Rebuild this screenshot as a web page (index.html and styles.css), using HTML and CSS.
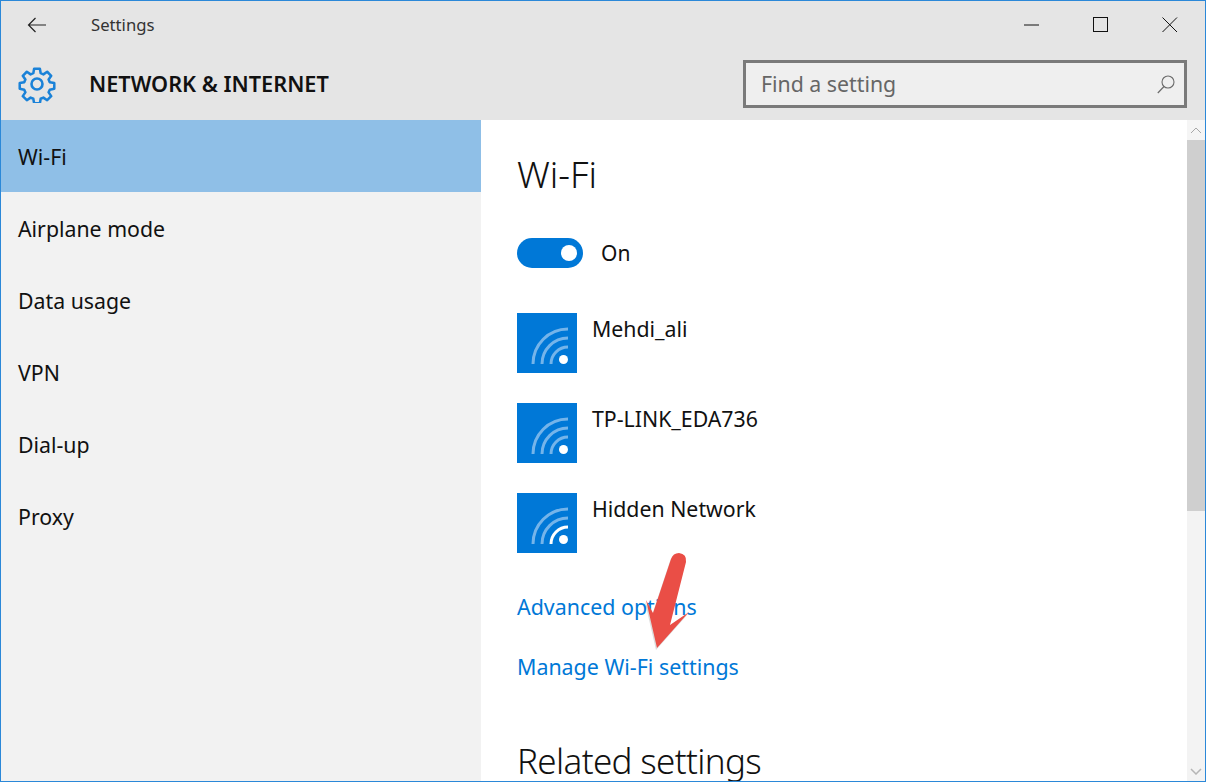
FILE: index.html
```html
<!DOCTYPE html>
<html lang="en">
<head>
<meta charset="utf-8">
<title>Settings</title>
<link rel="stylesheet" href="styles.css">
</head>
<body>
<div class="window">
  <header class="header">
    <div class="titlebar">
      <svg class="back" width="20" height="16" viewBox="0 0 20 16"><path d="M19 8H1.500M8.500 1 1.500 8l7 7" fill="none" stroke="#222" stroke-width="1.200"/></svg>
      <span class="app-title">Settings</span>
      <div class="controls">
        <svg class="ctl" width="16" height="16" viewBox="0 0 16 16"><path d="M0 8h15" stroke="#111" stroke-width="1"/></svg>
        <svg class="ctl" width="16" height="16" viewBox="0 0 16 16"><rect x=".5" y=".5" width="14" height="14" fill="none" stroke="#111"/></svg>
        <svg class="ctl" width="16" height="16" viewBox="0 0 16 16"><path d="M.5.5l14.500 14.500M15 .5.500 15" stroke="#111" stroke-width="1"/></svg>
      </div>
    </div>
    <div class="toolbar">
      <svg class="gear" width="38" height="38" viewBox="0 0 38 38"><path d="M15.800 2h6.400l.9 5 3 1.300 4.200-2.900 4.500 4.500-2.900 4.200 1.300 3 5 .9v6.400l-5 .9-1.300 3 2.900 4.200-4.500 4.500-4.200-2.900-3 1.300-.9 5h-6.400l-.9-5-3-1.300-4.200 2.900-4.500-4.500 2.900-4.200-1.300-3-5-.9v-6.400l5-.9 1.300-3-2.900-4.200 4.500-4.500 4.200 2.900 3-1.300z" fill="none" stroke="#1a82d8" stroke-width="2.800" stroke-linejoin="round" transform="translate(1.900 1.900) scale(.9)"/><circle cx="19" cy="19" r="5.500" fill="none" stroke="#1a82d8" stroke-width="2.600"/></svg>
      <h1 class="section-title">NETWORK &amp; INTERNET</h1>
      <div class="search">
        <span class="search-text">Find a setting</span>
        <svg width="18" height="19" viewBox="0 0 18 19"><circle cx="11" cy="7" r="6" fill="none" stroke="#6b6b6b" stroke-width="1.100"/><path d="M7 11.500.8 18" stroke="#6b6b6b" stroke-width="1.200" fill="none"/></svg>
      </div>
    </div>
  </header>
  <div class="body">
    <nav class="nav">
      <a class="nav-item selected">Wi-Fi</a>
      <a class="nav-item">Airplane mode</a>
      <a class="nav-item">Data usage</a>
      <a class="nav-item">VPN</a>
      <a class="nav-item">Dial-up</a>
      <a class="nav-item">Proxy</a>
    </nav>
    <main class="main">
      <div class="content">
        <h2 class="heading">Wi-Fi</h2>
        <div class="toggle-row">
          <span class="toggle"><span class="knob"></span></span>
          <span class="toggle-label">On</span>
        </div>
        <div class="networks">
          <div class="network">
            <svg class="net-icon" width="60" height="60" viewBox="0 0 60 60"><rect width="60" height="60" fill="#0078d7"/><g fill="none" stroke="#74b4ea" stroke-width="3"><path d="M16 51A35 35 0 0 1 51 16"/><path d="M25 51A26 26 0 0 1 51 25"/><path d="M34 51A17 17 0 0 1 51 34"/></g><circle cx="46.500" cy="46.500" r="4.500" fill="#fff"/></svg>
            <span class="net-name">Mehdi_ali</span>
          </div>
          <div class="network">
            <svg class="net-icon" width="60" height="60" viewBox="0 0 60 60"><rect width="60" height="60" fill="#0078d7"/><g fill="none" stroke="#74b4ea" stroke-width="3"><path d="M16 51A35 35 0 0 1 51 16"/><path d="M25 51A26 26 0 0 1 51 25"/><path d="M34 51A17 17 0 0 1 51 34"/></g><circle cx="46.500" cy="46.500" r="4.500" fill="#fff"/></svg>
            <span class="net-name">TP-LINK_EDA736</span>
          </div>
          <div class="network">
            <svg class="net-icon" width="60" height="60" viewBox="0 0 60 60"><rect width="60" height="60" fill="#0078d7"/><g fill="none" stroke="#74b4ea" stroke-width="3"><path d="M16 51A35 35 0 0 1 51 16"/><path d="M25 51A26 26 0 0 1 51 25"/></g><path d="M34 51A17 17 0 0 1 51 34" fill="none" stroke="#fff" stroke-width="3"/><circle cx="46.500" cy="46.500" r="4.500" fill="#fff"/></svg>
            <span class="net-name">Hidden Network</span>
          </div>
        </div>
        <a class="link first-link">Advanced options</a>
        <a class="link">Manage Wi-Fi settings</a>
        <h2 class="related">Related settings</h2>
      </div>
      <div class="scrollbar">
        <div class="sb-btn"><svg width="12" height="7" viewBox="0 0 12 7"><path d="M1 6l5-5 5 5" fill="none" stroke="#a8a8a8" stroke-width="1"/></svg></div>
        <div class="sb-thumb"></div>
        <div class="sb-track"></div>
        <div class="sb-end"><svg width="12" height="7" viewBox="0 0 12 7"><path d="M1 1l5 5 5-5" fill="none" stroke="#b5b5b5" stroke-width="1.500"/></svg></div>
      </div>
      <svg class="arrow" width="50" height="102" viewBox="0 0 50 102"><path d="M26 9Q28 3 34 3 42 4 41 12L25 75 44 62 12 98 1 50 8 63Z" fill="#8a8a8a" opacity=".3" transform="translate(-1 2)"/><path d="M26 9Q28 3 34 3 42 4 41 12L25 75 44 62 12 98 1 50 8 63Z" fill="#ea4e46"/></svg>
    </main>
  </div>
</div>
</body>
</html>
```
FILE: styles.css
```css
* { box-sizing: border-box; margin: 0; padding: 0; }
html, body { width: 1206px; height: 782px; overflow: hidden; }
body { font-family: "Noto Sans", "Open Sans", sans-serif; color: #111; background: #fff; }
.window { width: 1206px; height: 782px; border: 1px solid #2b88d8; display: flex; flex-direction: column; overflow: hidden; }
.header { height: 119px; background: #e5e5e5; flex: none; }
.titlebar { height: 48px; display: flex; align-items: center; padding-left: 26px; }
.back { flex: none; margin-top: -1px; }
.app-title { font-size: 16.700px; margin-left: 44px; margin-top: -1px; color: #333; }
.controls { margin-left: auto; display: flex; align-items: center; gap: 53px; padding-right: 27px; }
.ctl { display: block; }
.toolbar { display: flex; align-items: center; height: 71px; padding-left: 17px; padding-right: 18px; padding-bottom: 1px; }
.gear { flex: none; }
.section-title { font-size: 21.700px; line-height: 30px; font-weight: 600; margin-left: 33px; color: #111; }
.search { margin-left: auto; width: 444px; height: 48px; border: 3px solid #7a7a7a; background: #efefef; display: flex; align-items: center; justify-content: space-between; padding: 0 9px 0 15px; }
.search-text { font-size: 21.300px; line-height: 30px; color: #666; }
.body { flex: 1; display: flex; min-height: 0; }
.nav { width: 480px; flex: none; background: #f2f2f2; }
.nav-item { display: flex; align-items: center; height: 72px; padding-left: 17px; font-size: 21.300px; color: #111; }
.nav-item.selected { background: #8fbfe7; }
.main { flex: 1; min-width: 0; background: #fff; display: flex; position: relative; overflow: hidden; }
.content { flex: 1; padding: 24px 0 0 36px; min-width: 0; }
.heading { font-weight: 300; font-size: 36.500px; line-height: 60px; color: #111; }
.toggle-row { display: flex; align-items: center; margin-top: 34px; height: 30px; }
.toggle { width: 66px; height: 30px; border-radius: 15px; background: #0078d7; display: flex; align-items: center; justify-content: flex-end; padding-right: 6px; }
.knob { width: 16px; height: 16px; border-radius: 50%; background: #fff; }
.toggle-label { font-size: 21px; line-height: 30px; margin-left: 18px; }
.networks { display: flex; flex-direction: column; gap: 30px; margin-top: 45px; }
.network { display: flex; align-items: flex-start; height: 60px; }
.net-icon { display: block; flex: none; }
.net-name { font-size: 21.300px; line-height: 32px; margin-left: 15px; }
.link { display: block; font-size: 21.400px; line-height: 32px; color: #0078d7; margin-top: 28px; }
.first-link { margin-top: 38px; }
.related { font-weight: 300; font-size: 35px; line-height: 60px; letter-spacing: -.65px; color: #111; margin-top: 48px; }
.scrollbar { width: 18px; flex: none; display: flex; flex-direction: column; background: #f3f3f3; }
.sb-btn { height: 20px; display: flex; align-items: center; justify-content: center; background: #f5f5f5; }
.sb-thumb { height: 371px; background: #cfcfcf; }
.sb-track { flex: 1; }
.sb-end { height: 20px; display: flex; align-items: center; justify-content: center; }
.arrow { position: absolute; left: 164px; top: 430px; }
```
